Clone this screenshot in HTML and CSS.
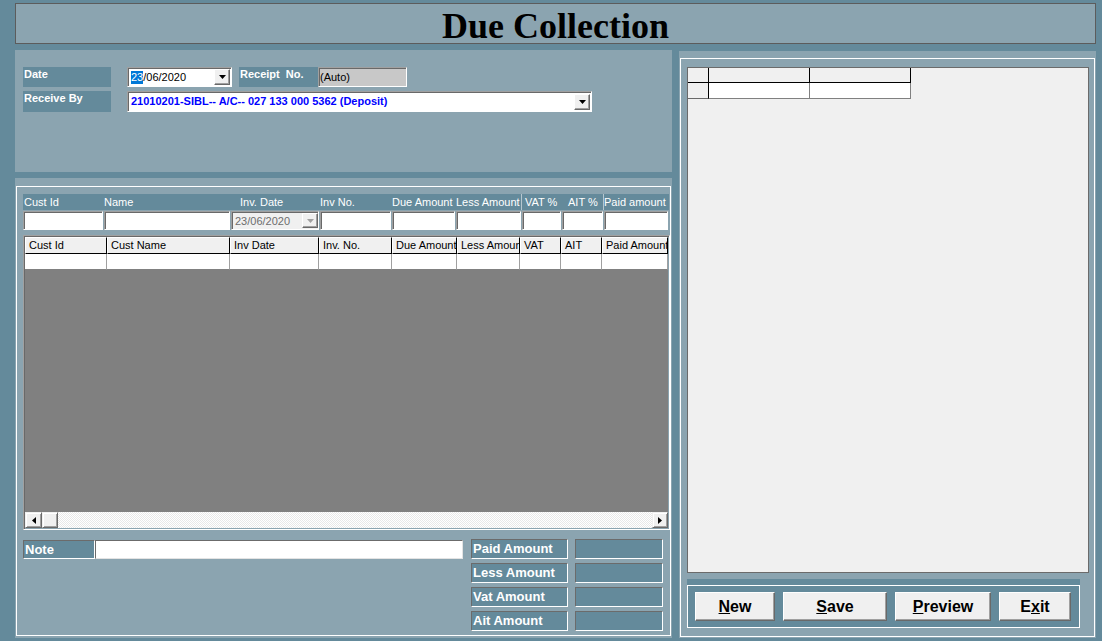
FILE: index.html
```html
<!DOCTYPE html>
<html>
<head>
<meta charset="utf-8">
<title>Due Collection</title>
<link rel="stylesheet" href="styles.css">
</head>
<body>
<div class="app">
  <header class="title">Due Collection</header>
  <div class="main">
    <div class="left">
      <section class="top-panel">
        <div class="row r1">
          <div class="lbl">Date</div>
          <div class="field date-field"><span class="sel">23</span>/06/2020<span class="ddbtn"><svg width="7" height="4" viewBox="0 0 7 4"><path d="M0 0h7L3.5 4z" fill="#000"/></svg></span></div>
          <div class="lbl receipt">Receipt&nbsp; No.</div>
          <div class="field auto">(Auto)</div>
        </div>
        <div class="row r2">
          <div class="lbl">Receive By</div>
          <div class="field combo">21010201-SIBL-- A/C-- 027 133 000 5362 (Deposit)<span class="ddbtn"><svg width="7" height="4" viewBox="0 0 7 4"><path d="M0 0h7L3.5 4z" fill="#000"/></svg></span></div>
        </div>
      </section>
      <section class="bottom-panel">
        <div class="frame">
          <div class="cols strip">
            <span class="pl1">Cust Id</span>
            <span>Name</span>
            <span class="pl9">Inv. Date</span>
            <span>Inv No.</span>
            <span>Due Amount</span>
            <span>Less Amount</span>
            <span class="pl3 sep">VAT %</span>
            <span class="pl6">AIT %</span>
            <span class="sep">Paid amount</span>
          </div>
          <div class="cols inputs">
            <span class="inp"></span>
            <span class="inp"></span>
            <span class="inp disabled">23/06/2020<span class="ddbtn dis"><svg width="7" height="4" viewBox="0 0 7 4"><path d="M0 0h7L3.5 4z" fill="#a0a0a0"/></svg></span></span>
            <span class="inp"></span>
            <span class="inp"></span>
            <span class="inp"></span>
            <span class="inp"></span>
            <span class="inp"></span>
            <span class="inp"></span>
          </div>
          <div class="grid">
            <div class="gcols gh">
              <span>Cust Id</span>
              <span>Cust Name</span>
              <span>Inv Date</span>
              <span>Inv. No.</span>
              <span>Due Amount</span>
              <span>Less Amount</span>
              <span>VAT</span>
              <span>AIT</span>
              <span>Paid Amount</span>
            </div>
            <div class="gcols gr">
              <span></span><span></span><span></span><span></span><span></span><span></span><span></span><span></span><span></span>
            </div>
            <div class="gbody"></div>
            <div class="hscroll">
              <span class="sbtn sleft"><svg width="4" height="7" viewBox="0 0 4 7"><path d="M4 0v7L0 3.5z" fill="#000"/></svg></span>
              <span class="sbtn thumb"></span>
              <span class="track"></span>
              <span class="sbtn"><svg width="4" height="7" viewBox="0 0 4 7"><path d="M0 0v7L4 3.5z" fill="#000"/></svg></span>
            </div>
          </div>
          <div class="summary">
            <div class="note-row">
              <div class="lbl2 note-lbl">Note</div>
              <div class="note-inp"></div>
            </div>
            <div class="amounts">
              <div class="amt"><div class="lbl2 amt-lbl">Paid Amount</div><div class="amt-val"></div></div>
              <div class="amt"><div class="lbl2 amt-lbl">Less Amount</div><div class="amt-val"></div></div>
              <div class="amt"><div class="lbl2 amt-lbl">Vat Amount</div><div class="amt-val"></div></div>
              <div class="amt"><div class="lbl2 amt-lbl">Ait Amount</div><div class="amt-val"></div></div>
            </div>
          </div>
        </div>
      </section>
    </div>
    <aside class="right">
      <div class="rframe">
        <div class="listbox">
          <div class="mini">
            <span class="mc"></span><span class="mc"></span><span class="mc"></span>
            <span class="mr"></span><span class="md"></span><span class="md"></span>
          </div>
        </div>
        <div class="btnbar">
          <div class="btnframe">
            <button class="btn b-new"><u>N</u>ew</button>
            <button class="btn b-save"><u>S</u>ave</button>
            <button class="btn b-prev"><u>P</u>review</button>
            <button class="btn b-exit">E<u>x</u>it</button>
          </div>
        </div>
      </div>
    </aside>
  </div>
</div>
</body>
</html>
```

FILE: styles.css
```css
* { box-sizing: border-box; margin: 0; padding: 0; }
html, body { width: 1102px; height: 641px; overflow: hidden; }
body {
  background: #648a9b;
  font-family: "Liberation Sans", Arial, sans-serif;
  font-size: 11px;
  color: #000;
}
.app {
  display: flex;
  flex-direction: column;
  gap: 6px;
  height: 641px;
  padding: 3px 6px 0 15px;
}
.title {
  flex: none;
  height: 41px;
  background: #8ba4b0;
  border: 1px solid #5c5c5c;
  padding-top: 3px;
  text-align: center;
  font: bold 36px/38px "Liberation Serif", "Times New Roman", serif;
  color: #000;
}
.main { display: flex; gap: 7px; flex: 1; min-height: 0; }
.left { flex: none; width: 657px; display: flex; flex-direction: column; gap: 6px; }

/* top panel */
.top-panel {
  height: 122px;
  background: #8ba4b0;
  padding: 17px 0 0 8px;
  display: flex;
  flex-direction: column;
  gap: 4px;
}
.row { display: flex; }
.r1 { height: 20px; }
.r2 { height: 21px; }
.lbl {
  width: 88px;
  margin-right: 16px;
  background: #648a9b;
  color: #fff;
  font-weight: bold;
  line-height: 13px;
  padding: 1px 0 0 1px;
  white-space: nowrap;
}
.lbl.receipt { width: 79px; margin: 0 0 0 7px; }
.field {
  display: flex;
  align-items: center;
  background: #fff;
  border: 1px solid;
  border-color: #a0a0a0 #fff #fff #a0a0a0;
  box-shadow: inset 1px 1px 0 #696969;
  padding-left: 3px;
  white-space: nowrap;
  line-height: 13px;
}
.date-field { width: 105px; }
.sel { background: #0078d7; color: #fff; }
.auto { width: 89px; background: #c8c8c8; padding-left: 1px; }
.combo { width: 465px; color: #0000ff; font-weight: bold; }
.ddbtn {
  flex: none;
  margin-left: auto;
  margin-right: 1px;
  width: 16px;
  height: 16px;
  background: #f0f0f0;
  border: 1px solid;
  border-color: #fff #696969 #696969 #fff;
  box-shadow: inset -1px -1px 0 #a0a0a0;
  display: flex;
  align-items: center;
  justify-content: center;
}
.ddbtn svg { display: block; }

/* bottom panel */
.bottom-panel {
  height: 460px;
  background: #8ba4b0;
  padding: 8px 1px 2px 1px;
  display: flex;
}
.frame {
  flex: 1;
  border: 1px solid #fff;
  padding: 7px 0 0 6px;
  display: flex;
  flex-direction: column;
}
.cols {
  display: grid;
  grid-template-columns: 81px 127px 89px 72px 64px 66px 40px 42px 65px;
  width: 646px;
}
.strip {
  height: 16px;
  background: #648a9b;
  color: #fff;
  line-height: 16px;
}
.strip span { white-space: nowrap; overflow: hidden; }
.pl1 { padding-left: 1px; }
.pl3 { padding-left: 3px; }
.pl6 { padding-left: 6px; }
.pl9 { padding-left: 9px; }
.sep { box-shadow: -1px 0 0 #b7c7cf; }
.inputs { height: 20px; margin-top: 1px; }
.inp {
  height: 19px;
  margin-right: 1px;
  background: #fff;
  border: 1px solid;
  border-color: #a0a0a0 #fff #fff #a0a0a0;
  box-shadow: inset 1px 1px 0 #696969;
}
.inp.disabled {
  background: #f0f0f0;
  color: #6d6d6d;
  display: flex;
  align-items: center;
  padding-left: 3px;
  white-space: nowrap;
}
.ddbtn.dis { margin-right: 0; height: 15px; }

.grid {
  width: 647px;
  height: 295px;
  margin-top: 4px;
  border: 1px solid;
  border-color: #a0a0a0 #fff #fff #a0a0a0;
  box-shadow: inset 1px 1px 0 #696969;
  padding: 1px;
  display: flex;
  flex-direction: column;
}
.gcols {
  display: grid;
  grid-template-columns: 82px 123px 89px 73px 65px 63px 41px 41px 66px;
}
.gh span {
  height: 17px;
  background: #f0f0f0;
  border-top: 1px solid #fff;
  border-left: 1px solid #fff;
  border-right: 1px solid #000;
  border-bottom: 1px solid #000;
  padding-left: 3px;
  line-height: 15px;
  white-space: nowrap;
  overflow: hidden;
}
.gr span {
  height: 16px;
  background: #fff;
  border-right: 1px solid #a0a0a0;
  border-bottom: 1px solid #808080;
}
.gbody { flex: 1; background: #808080; }
.hscroll { height: 16px; display: flex; }
.sbtn {
  flex: none;
  width: 16px;
  height: 16px;
  background: #f0f0f0;
  border: 1px solid;
  border-color: #f0f0f0 #696969 #696969 #f0f0f0;
  box-shadow: inset 1px 1px 0 #fff, inset -1px -1px 0 #a0a0a0;
  display: flex;
  align-items: center;
  justify-content: center;
}
.sbtn.sleft { width: 17px; }
.sbtn svg { display: block; }
.track {
  flex: 1;
  background: repeating-conic-gradient(#fff 0 25%, #e8e8e8 0 50%) 0 0 / 2px 2px;
}

.summary { display: flex; gap: 8px; margin-top: 9px; }
.note-row { display: flex; width: 440px; height: 19px; margin-top: 1px; }
.lbl2 {
  background: #648a9b;
  color: #fff;
  font: bold 13px/17px "Liberation Sans", Arial, sans-serif;
  border: 1px solid;
  border-color: #6b6b6b #fff #fff #6b6b6b;
  padding-left: 1px;
  white-space: nowrap;
}
.note-lbl { width: 72px; }
.note-inp {
  flex: 1;
  background: #fff;
  border: 1px solid;
  border-color: #6b6b6b #e3e3e3 #e3e3e3 #6b6b6b;
}
.amounts { display: flex; flex-direction: column; gap: 4px; }
.amt { display: flex; gap: 7px; height: 20px; }
.amt-lbl { width: 97px; line-height: 18px; }
.amt-val {
  width: 88px;
  background: #648a9b;
  border: 1px solid;
  border-color: #6b6b6b #fff #fff #6b6b6b;
}

/* right panel */
.right {
  flex: none;
  width: 417px;
  margin: 1px 0 3px;
  background: #8ba4b0;
  padding: 7px 1px 1px 1px;
  display: flex;
}
.rframe {
  flex: 1;
  border: 1px solid #fff;
  padding: 8px 0 0 6px;
  display: flex;
  flex-direction: column;
}
.listbox {
  width: 402px;
  height: 506px;
  background: #f0f0f0;
  border: 1px solid #6b6b6b;
}
.mini {
  display: grid;
  grid-template-columns: 21px 101px 101px;
  grid-template-rows: 15px 16px;
  width: 223px;
}
.mc { background: #f0f0f0; border-right: 1px solid #000; border-bottom: 1px solid #000; }
.mr { background: #f0f0f0; border-right: 1px solid #000; border-bottom: 1px solid #696969; }
.md { background: #fff; border-right: 1px solid #808080; border-bottom: 1px solid #808080; }
.btnbar {
  width: 393px;
  height: 49px;
  margin-top: 6px;
  background: #648a9b;
  padding-top: 6px;
}
.btnframe {
  height: 43px;
  border: 1px solid #fff;
  padding: 6px 0 0 7px;
  display: flex;
  align-items: flex-start;
  gap: 8px;
}
.btn {
  height: 29px;
  background: #f0f0f0;
  border: 1px solid;
  border-color: #fff #696969 #696969 #fff;
  box-shadow: inset -1px -1px 0 #a0a0a0;
  font: bold 16px "Liberation Sans", Arial, sans-serif;
  color: #000;
  display: flex;
  align-items: center;
  justify-content: center;
  cursor: default;
}
.b-new { width: 80px; }
.b-save { width: 104px; }
.b-prev { width: 96px; }
.b-exit { width: 72px; }
```
